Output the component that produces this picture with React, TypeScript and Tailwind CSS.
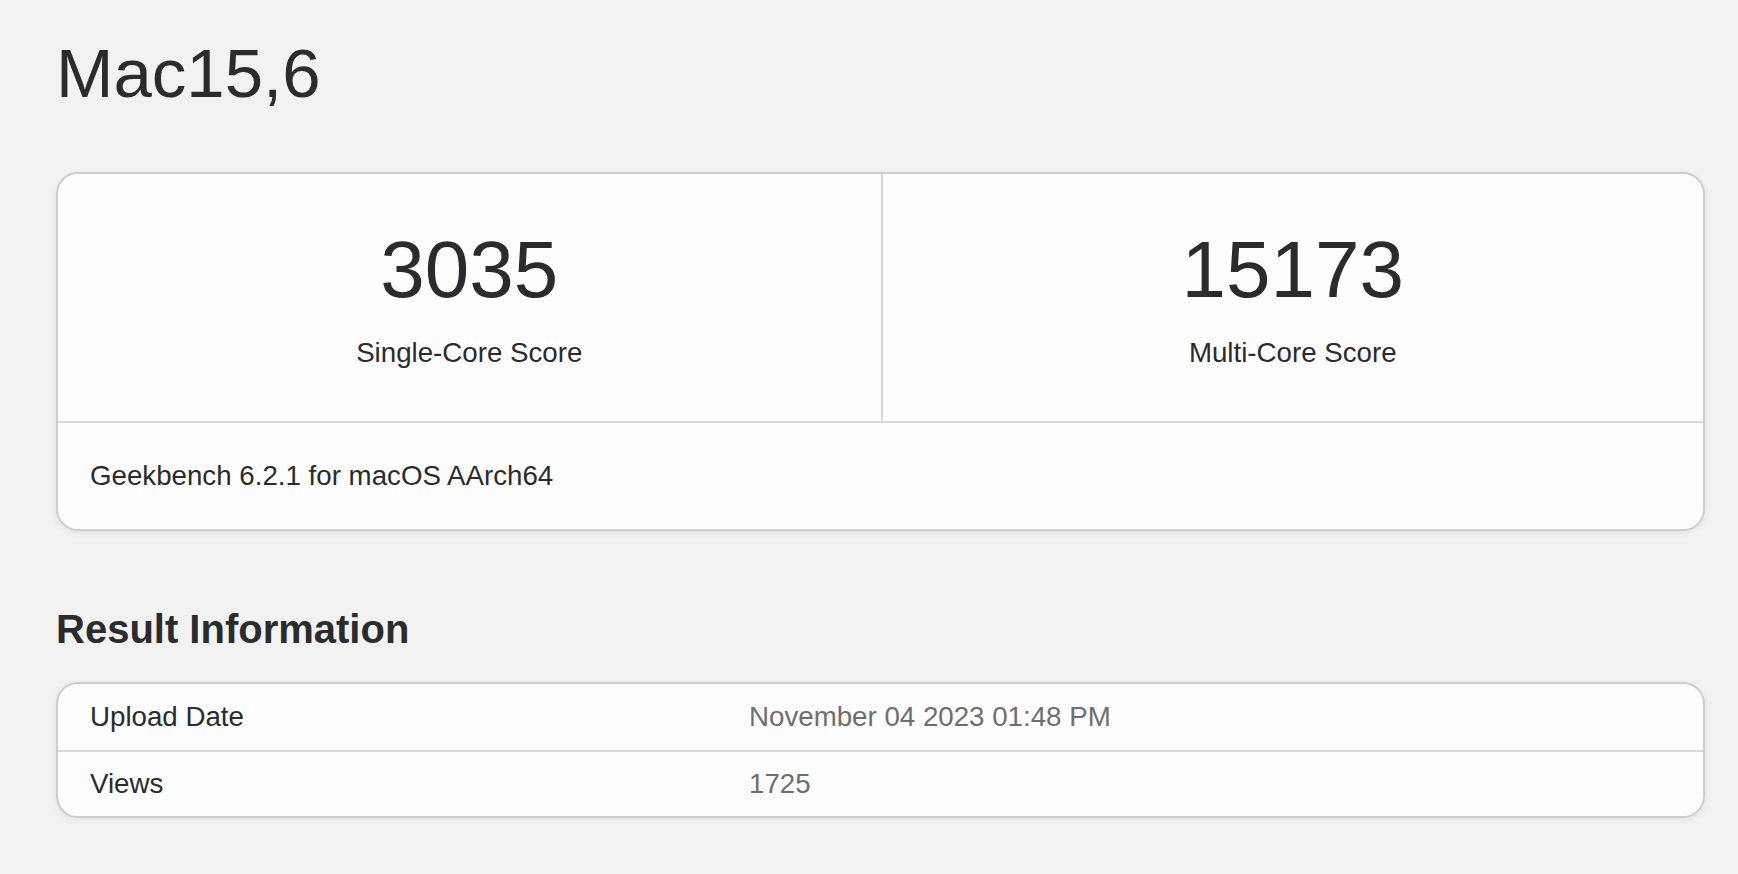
import React from "react";

export default function App() {
  return (
    <div
      className="min-h-[874px] bg-[#f2f2f2] pl-[56px] pr-[33px] pt-[34px] pb-[40px] text-[#2b2b2e]"
      style={{ fontFamily: '"Liberation Sans", Arial, sans-serif' }}
    >
      <h1 className="text-[69px] leading-[80px] font-normal">Mac15,6</h1>

      <div className="mt-[58px] rounded-[22px] border-2 border-[#cdcdcd] bg-[#fdfdfd] shadow-[0_2px_6px_rgba(0,0,0,0.07)] overflow-hidden">
        <div className="grid grid-cols-2 h-[249px] border-b-2 border-[#d9d9d9]">
          <div className="flex flex-col items-center pt-[56px]">
            <div className="text-[80px] leading-[80px]">3035</div>
            <div className="mt-[27px] text-[27.7px] leading-[32px]">Single-Core Score</div>
          </div>
          <div className="flex flex-col items-center pt-[56px] border-l-2 border-[#d9d9d9]">
            <div className="text-[80px] leading-[80px]">15173</div>
            <div className="mt-[27px] text-[27.7px] leading-[32px]">Multi-Core Score</div>
          </div>
        </div>
        <div className="h-[106px] flex items-center px-[32px] text-[27.7px] leading-[32px]">
          Geekbench 6.2.1 for macOS AArch64
        </div>
      </div>

      <h2 className="mt-[74px] text-[40px] leading-[48px] font-bold">Result Information</h2>

      <div className="mt-[29px] rounded-[22px] border-2 border-[#cdcdcd] bg-[#fdfdfd] shadow-[0_2px_6px_rgba(0,0,0,0.07)] overflow-hidden text-[27.7px] leading-[32px]">
        <div className="flex h-[66px] items-center">
          <div className="w-[40%] px-[32px]">Upload Date</div>
          <div className="w-[60%] pl-[33px] text-[#6e6e70]">November 04 2023 01:48 PM</div>
        </div>
        <div className="flex h-[66px] items-center border-t-2 border-[#d9d9d9]">
          <div className="w-[40%] px-[32px]">Views</div>
          <div className="w-[60%] pl-[33px] text-[#6e6e70]">1725</div>
        </div>
      </div>
    </div>
  );
}
